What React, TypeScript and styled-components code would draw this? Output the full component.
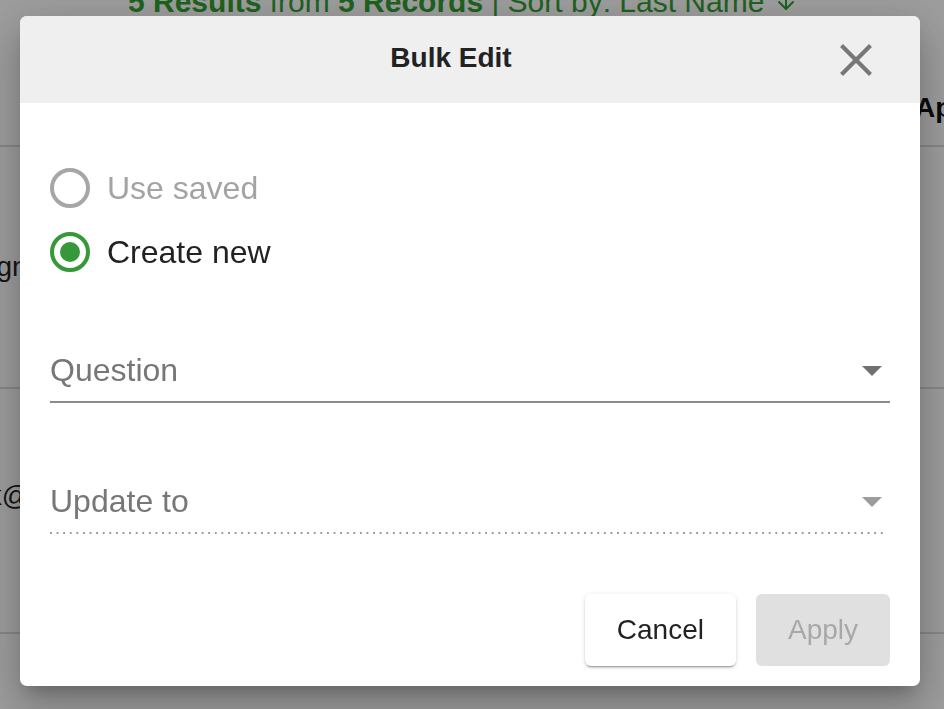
import React, { useState } from "react";
import styled, { createGlobalStyle } from "styled-components";
import { ArrowDown } from "lucide-react";

const GlobalStyle = createGlobalStyle`
  html, body {
    margin: 0;
    padding: 0;
    height: 100%;
    overflow: hidden;
  }
  body {
    font-family: "Liberation Sans", Arial, sans-serif;
    background: #ffffff;
    color: #222;
  }
`;

// page behind the dialog
const Page = styled.div`
  width: 944px;
  height: 709px;
  overflow: hidden;
`;

const ResultsBar = styled.div`
  display: flex;
  align-items: center;
  gap: 10px;
  margin-top: -13px;
  padding-left: 128px;
  height: 30px;
  font-size: 30px;
  line-height: 30px;
  color: #31a031;
  white-space: nowrap;

  strong {
    font-weight: 700;
  }
`;

const HeaderRow = styled.div`
  display: flex;
  justify-content: flex-end;
  align-items: center;
  height: 130px;
  box-sizing: border-box;
  padding-top: 54px;
  border-bottom: 2px solid #dcdcdc;
`;

const HeaderCell = styled.div`
  width: 29px;
  overflow: hidden;
  white-space: nowrap;
  font-size: 28px;
  font-weight: 700;
  color: #111;
`;

const Row = styled.div<{ $height: number }>`
  display: flex;
  align-items: center;
  height: ${(p) => p.$height}px;
  border-bottom: 2px solid #dcdcdc;
  box-sizing: border-box;
`;

const Cell = styled.div<{ $shift: number; $lift?: number }>`
  margin-left: ${(p) => p.$shift}px;
  margin-top: ${(p) => -(p.$lift || 0)}px;
  font-size: 28px;
  color: #222;
  white-space: nowrap;
`;

// dialog
const Backdrop = styled.div`
  position: fixed;
  inset: 0;
  background: rgba(0, 0, 0, 0.385);
  display: flex;
  align-items: flex-start;
  justify-content: flex-start;
  padding: 16px 0 0 20px;
`;

const Dialog = styled.div`
  width: 900px;
  height: 670px;
  background: #fff;
  border-radius: 7px;
  overflow: hidden;
  display: flex;
  flex-direction: column;
  box-shadow: 0 11px 15px -7px rgba(0, 0, 0, 0.2),
    0 24px 38px 3px rgba(0, 0, 0, 0.14), 0 9px 46px 8px rgba(0, 0, 0, 0.12);
`;

const DialogHeader = styled.div`
  height: 87px;
  flex: none;
  background: #efefef;
  display: grid;
  grid-template-columns: 1fr auto 1fr;
  align-items: center;
`;

const Title = styled.h2`
  grid-column: 2;
  margin: 0 38px 0 0;
  font-size: 28px;
  font-weight: 700;
  color: #222;
  padding-bottom: 4px;
`;

const CloseButton = styled.button`
  grid-column: 3;
  justify-self: end;
  margin-right: 45px;
  width: 38px;
  height: 38px;
  padding: 0;
  border: none;
  background: transparent;
  display: flex;
  align-items: center;
  justify-content: center;
  cursor: pointer;
`;

const DialogBody = styled.div`
  flex: 1;
  display: flex;
  flex-direction: column;
  padding: 65px 30px 20px;
`;

const RadioGroup = styled.div`
  display: flex;
  flex-direction: column;
  gap: 24px;
`;

const RadioLabel = styled.label<{ $disabled?: boolean }>`
  display: flex;
  align-items: center;
  gap: 17px;
  height: 40px;
  font-size: 32px;
  color: ${(p) => (p.$disabled ? "#a3a3a3" : "#222")};
  cursor: ${(p) => (p.$disabled ? "default" : "pointer")};
`;

const RadioCircle = styled.span<{ $checked: boolean; $disabled?: boolean }>`
  width: 40px;
  height: 40px;
  box-sizing: border-box;
  border-radius: 50%;
  border: 4px solid ${(p) => (p.$disabled ? "#a6a6a6" : "#35993a")};
  display: flex;
  align-items: center;
  justify-content: center;

  &::after {
    content: "";
    width: 20px;
    height: 20px;
    border-radius: 50%;
    background: #35993a;
    display: ${(p) => (p.$checked ? "block" : "none")};
  }
`;

const SelectField = styled.div<{ $disabled?: boolean }>`
  display: flex;
  align-items: center;
  justify-content: space-between;
  height: 61px;
  margin-top: 68px;
  margin-right: ${(p) => (p.$disabled ? "5px" : "0")};
  border-bottom: ${(p) => (p.$disabled ? "none" : "2px solid #8c8c8c")};
  padding-bottom: ${(p) => (p.$disabled ? "2px" : "0")};
  background: ${(p) =>
    p.$disabled
      ? "linear-gradient(to right, #9a9a9a 2px, transparent 2px) left bottom / 6.6px 2px repeat-x"
      : "none"};
  font-size: 32px;
  color: #777;
`;

const Caret = styled.span<{ $disabled?: boolean }>`
  width: 0;
  height: 0;
  margin-right: ${(p) => (p.$disabled ? "3px" : "8px")};
  border-left: 10px solid transparent;
  border-right: 10px solid transparent;
  border-top: 10px solid ${(p) => (p.$disabled ? "#9c9c9c" : "#717171")};
`;

const Actions = styled.div`
  display: flex;
  justify-content: flex-end;
  gap: 20px;
  margin-top: 60px;
`;

const Button = styled.button<{ $primary?: boolean }>`
  height: 72px;
  padding: 0 32px;
  border: none;
  border-radius: 6px;
  font-family: "Liberation Sans", Arial, sans-serif;
  font-size: 28px;
  cursor: pointer;
  background: ${(p) => (p.$primary ? "#e0e0e0" : "#fff")};
  color: ${(p) => (p.$primary ? "#a8a8a8" : "#222")};
  box-shadow: ${(p) =>
    p.$primary
      ? "none"
      : "0 3px 1px -2px rgba(0,0,0,0.2), 0 2px 2px 0 rgba(0,0,0,0.14), 0 1px 5px 0 rgba(0,0,0,0.12)"};
`;

const CloseIcon = () => (
  <svg width="32" height="32" viewBox="0 0 32 32">
    <path
      d="M3 3 L29 29 M29 3 L3 29"
      stroke="#777"
      strokeWidth="4.2"
      strokeLinecap="square"
      fill="none"
    />
  </svg>
);

const App = () => {
  const [mode, setMode] = useState("new");

  return (
    <>
      <GlobalStyle />
      <Page>
        <ResultsBar>
          <span>
            <strong>5 Results</strong> from <strong>5 Records</strong> | Sort
            by: Last Name
          </span>
          <ArrowDown size={24} color="#31a031" strokeWidth={2} />
        </ResultsBar>
        <HeaderRow>
          <HeaderCell>Approved</HeaderCell>
        </HeaderRow>
        <Row $height={242}>
          <Cell $shift={-100}>Campaign</Cell>
        </Row>
        <Row $height={245}>
          <Cell $shift={-48} $lift={30}>
            nick@
          </Cell>
        </Row>
        <Row $height={100}>
          <Cell $shift={0}> </Cell>
        </Row>
      </Page>

      <Backdrop>
        <Dialog>
          <DialogHeader>
            <Title>Bulk Edit</Title>
            <CloseButton aria-label="Close">
              <CloseIcon />
            </CloseButton>
          </DialogHeader>
          <DialogBody>
            <RadioGroup>
              <RadioLabel $disabled>
                <RadioCircle $checked={mode === "saved"} $disabled />
                Use saved
              </RadioLabel>
              <RadioLabel onClick={() => setMode("new")}>
                <RadioCircle $checked={mode === "new"} />
                Create new
              </RadioLabel>
            </RadioGroup>

            <SelectField>
              <span>Question</span>
              <Caret />
            </SelectField>

            <SelectField $disabled>
              <span>Update to</span>
              <Caret $disabled />
            </SelectField>

            <Actions>
              <Button>Cancel</Button>
              <Button $primary disabled>
                Apply
              </Button>
            </Actions>
          </DialogBody>
        </Dialog>
      </Backdrop>
    </>
  );
};

export default App;
